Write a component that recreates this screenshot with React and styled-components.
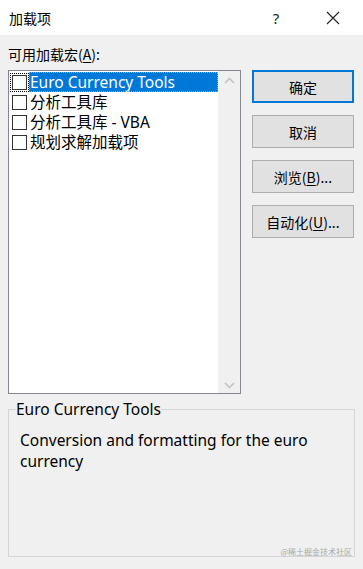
import React from "react";
import styled, { createGlobalStyle } from "styled-components";

const Global = createGlobalStyle`
  html, body { margin: 0; padding: 0; background: #f0f0f0; }
  body { font-family: "Noto Sans", "Noto Sans CJK SC", sans-serif; color: #000; }
  * { box-sizing: border-box; }
`;

const Window = styled.div`
  width: 363px;
  height: 569px;
  display: flex;
  flex-direction: column;
  background: #f0f0f0;
  overflow: hidden;
  position: relative;
`;

const TitleBar = styled.div`
  height: 35px;
  background: #fff;
  display: flex;
  align-items: center;
  padding-left: 9px;
`;

const Title = styled.div`
  flex: 1;
  font-size: 14px;
  font-family: "Noto Sans CJK SC", sans-serif;
`;

const TitleButton = styled.div`
  width: ${(p) => p.w}px;
  height: 35px;
  display: flex;
  align-items: center;
  justify-content: center;
  font-size: 15px;
  color: #222;
`;

const Body = styled.div`
  flex: 1;
  padding: 9px 9px 0 8px;
  display: flex;
  flex-direction: column;
`;

const Label = styled.div`
  font-size: 14px;
  height: 20px;
  line-height: 20px;
  font-family: "Noto Sans CJK SC", sans-serif;
  margin-bottom: 6px;
`;

const U = styled.span`
  text-decoration: underline;
  text-underline-offset: 2px;
`;

const Main = styled.div`
  display: flex;
  gap: 11px;
`;

const ListBox = styled.div`
  width: 233px;
  height: 324px;
  border: 1px solid #828790;
  background: #fff;
  display: flex;
`;

const Items = styled.div`
  flex: 1;
  padding: 1px 0 0 1px;
  display: flex;
  flex-direction: column;
`;

const Item = styled.div`
  height: 20px;
  display: flex;
  align-items: center;
  gap: 2px;
`;

const Check = styled.div`
  width: 15px;
  height: 15px;
  margin-left: 2px;
  border: 1px solid #333;
  background: #fff;
  flex: none;
  outline: ${(p) => (p.focus ? "1px dotted #000" : "none")};
  outline-offset: 1px;
`;

const ItemText = styled.div`
  font-size: 15.5px;
  line-height: 20px;
  height: 20px;
  padding: 0 2px 0 1px;
  width: ${(p) => (p.selected ? "189px" : "auto")};
  background: ${(p) => (p.selected ? "#0078d7" : "transparent")};
  color: ${(p) => (p.selected ? "#fff" : "#000")};
  outline: ${(p) => (p.selected ? "1px dotted #7fb4e6" : "none")};
  outline-offset: -1px;
  font-family: "Noto Sans", "Noto Sans CJK SC", sans-serif;
  white-space: nowrap;
`;

const ScrollBar = styled.div`
  width: 22px;
  background: #f0f0f0;
  display: flex;
  flex-direction: column;
  justify-content: space-between;
  align-items: center;
  padding: 6px 0 4px;
`;

const Buttons = styled.div`
  display: flex;
  flex-direction: column;
  gap: 12px;
`;

const Button = styled.div`
  width: 102px;
  height: 33px;
  background: #e1e1e1;
  border: ${(p) => (p.primary ? "2px solid #0078d7" : "1px solid #adadad")};
  display: flex;
  align-items: center;
  justify-content: center;
  font-size: 14px;
  font-family: "Noto Sans CJK SC", sans-serif;
`;

const Group = styled.fieldset`
  margin: 6px 0 0 0;
  width: 347px;
  height: 157px;
  border: 1px solid #d5d5d5;
  padding: 12px 11px 0;
`;

const Legend = styled.legend`
  font-size: 15.5px;
  padding: 0;
  margin-left: -4px;
  line-height: 18px;
  font-family: "Noto Sans", sans-serif;
`;

const Desc = styled.div`
  font-size: 15.5px;
  line-height: 21px;
  font-family: "Noto Sans", sans-serif;
`;

const Watermark = styled.div`
  position: absolute;
  right: 11px;
  bottom: 12px;
  font-size: 8px;
  color: #a8a8a8;
  font-family: "Noto Sans CJK SC", sans-serif;
  line-height: 10px;
`;

const Arrow = ({ up }) => (
  <svg width="11" height="7" viewBox="0 0 11 7">
    <path
      d={up ? "M1 6 L5.5 1.5 L10 6" : "M1 1 L5.5 5.5 L10 1"}
      fill="none"
      stroke="#c3c3c3"
      strokeWidth="1.6"
    />
  </svg>
);

export default function App() {
  const items = ["Euro Currency Tools", "分析工具库", "分析工具库 - VBA", "规划求解加载项"];
  return (
    <Window>
      <Global />
      <TitleBar>
        <Title>加载项</Title>
        <TitleButton w={54}>?</TitleButton>
        <TitleButton w={60}>
          <svg width="14" height="14" viewBox="0 0 14 14">
            <path d="M1 1 L13 13 M13 1 L1 13" stroke="#222" strokeWidth="1.1" />
          </svg>
        </TitleButton>
      </TitleBar>
      <Body>
        <Label>
          可用加载宏(<U>A</U>):
        </Label>
        <Main>
          <ListBox>
            <Items>
              {items.map((t, i) => (
                <Item key={t}>
                  <Check focus={i === 0} />
                  <ItemText selected={i === 0}>{t}</ItemText>
                </Item>
              ))}
            </Items>
            <ScrollBar>
              <Arrow up />
              <Arrow />
            </ScrollBar>
          </ListBox>
          <Buttons>
            <Button primary>确定</Button>
            <Button>取消</Button>
            <Button>
              浏览(<U>B</U>)...
            </Button>
            <Button>
              自动化(<U>U</U>)...
            </Button>
          </Buttons>
        </Main>
        <Group>
          <Legend>Euro Currency Tools</Legend>
          <Desc>Conversion and formatting for the euro currency</Desc>
        </Group>
      </Body>
      <Watermark>@稀土掘金技术社区</Watermark>
    </Window>
  );
}
